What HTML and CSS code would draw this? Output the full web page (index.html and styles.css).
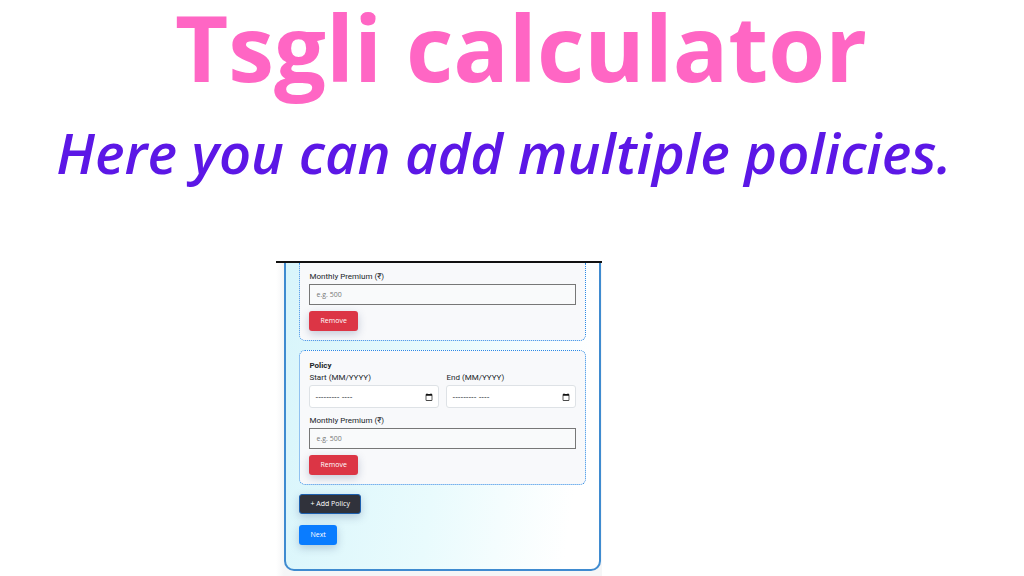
FILE: index.html
```html
<!DOCTYPE html>
<html lang="en">
<head>
    <meta charset="UTF-8">
    <meta name="viewport" content="width=device-width, initial-scale=1.0">
    <title>Tsgli calculator</title>
    <link rel="stylesheet" href="styles.css">
</head>
<body>
    <header class="intro">
        <h1 class="intro_title">Tsgli calculator</h1>
        <p class="intro_text">Here you can add multiple policies.</p>
    </header>
    <main class="preview">
        <form class="calc_form">
            <!-- first policy, scrolled down to its premium -->
            <div class="policy policy_cut">
                <label class="label" for="premium1">Monthly Premium (₹)</label>
                <input class="premium" id="premium1" type="text" placeholder="e.g. 500">
                <button class="btn btn_remove" type="button">Remove</button>
            </div>
            <div class="policy">
                <h2 class="policy_title">Policy</h2>
                <div class="dates">
                    <div class="date_item">
                        <label class="label" for="start2">Start (MM/YYYY)</label>
                        <div class="month">
                            <input class="month_input" id="start2" type="text" placeholder="--------- ----">
                            <button class="month_btn" type="button" aria-label="Pick start month">
                                <svg viewBox="0 0 24 24" width="8" height="8"><path fill="#111" d="M20 3h-1V1h-2v2H7V1H5v2H4c-1.100 0-2 .9-2 2v16c0 1.100.9 2 2 2h16c1.100 0 2-.9 2-2V5c0-1.100-.9-2-2-2zm0 18H4V8h16v13z"/></svg>
                            </button>
                        </div>
                    </div>
                    <div class="date_item">
                        <label class="label" for="end2">End (MM/YYYY)</label>
                        <div class="month">
                            <input class="month_input" id="end2" type="text" placeholder="--------- ----">
                            <button class="month_btn" type="button" aria-label="Pick end month">
                                <svg viewBox="0 0 24 24" width="8" height="8"><path fill="#111" d="M20 3h-1V1h-2v2H7V1H5v2H4c-1.100 0-2 .9-2 2v16c0 1.100.9 2 2 2h16c1.100 0 2-.9 2-2V5c0-1.100-.9-2-2-2zm0 18H4V8h16v13z"/></svg>
                            </button>
                        </div>
                    </div>
                </div>
                <label class="label" for="premium2">Monthly Premium (₹)</label>
                <input class="premium" id="premium2" type="text" placeholder="e.g. 500">
                <button class="btn btn_remove" type="button">Remove</button>
            </div>
            <button class="btn btn_add" type="button">+ Add Policy</button>
            <button class="btn btn_next" type="button">Next</button>
        </form>
    </main>
</body>
</html>
```

FILE: styles.css
```css
html,body{
    margin:0;
    padding:0;
    background:#fff;
}
body{
    font-family: Roboto, "Noto Sans", sans-serif;
    color:#212529;
}
.intro{
    font-family: "Open Sans", "Noto Sans", sans-serif;
    text-align:center;
    white-space:nowrap;
}
.intro_title{
    margin:0;
    padding-left:18px;
    font-size:92px;
    line-height:94px;
    font-weight:700;
    color:#ff66c4;
}
.intro_text{
    margin:0;
    padding:24px 16px 0 0;
    font-size:56px;
    line-height:68px;
    font-weight:600;
    font-style:italic;
    color:#5c17e6;
}
/* 
    form preview
*/
.preview{
    box-sizing:border-box;
    max-width:326px;
    margin:75px 0 0 27%;
    padding:0 1px 6px 8px;
    border-top:2px solid #111;
    background: linear-gradient(to right, #fff, #f5f6f7 8px);
}
.calc_form{
    display:flex;
    flex-direction:column;
    align-items:flex-start;
    padding:0 13px 24px;
    border:2px solid #3f8bd0;
    border-top:0;
    border-radius:0 0 10px 10px;
    background: linear-gradient(98deg, #d8f5fb, #e9fbfd 50%, #fff 90%);
}
.policy{
    box-sizing:border-box;
    display:flex;
    flex-direction:column;
    align-items:flex-start;
    width:100%;
    margin-bottom:9px;
    padding:9px;
    border:1px dotted #2b8ae6;
    border-radius:6px;
    background:#f8f9fb;
}
.policy_cut{
    padding-top:7px;
    border-top:0;
    border-radius:0 0 6px 6px;
}
.policy_title{
    margin:0;
    font-size:8px;
    line-height:11px;
    font-weight:700;
}
.label{
    font-size:8px;
    line-height:13px;
}
.dates{
    display:flex;
    gap:7px;
    width:100%;
    margin-bottom:6px;
}
.date_item{
    display:flex;
    flex:1;
    flex-direction:column;
    gap:1px;
    min-width:0;
}
.month{
    box-sizing:border-box;
    display:flex;
    align-items:center;
    height:23px;
    padding:0 5px;
    border:1px solid #dee2e6;
    border-radius:3px;
    background:#fff;
}
.month_input{
    flex:1;
    min-width:0;
    padding:0;
    border:0;
    background:none;
    font-family: "Liberation Sans", sans-serif;
    font-size:8px;
}
.month_input::placeholder{
    color:#212529;
}
.month_btn{
    display:flex;
    padding:0;
    border:0;
    background:none;
}
.premium{
    box-sizing:border-box;
    width:100%;
    height:21px;
    margin:1px 0 6px;
    padding:0 6px;
    border:1px solid #777;
    background:#f9fafb;
    font-family: "Open Sans", sans-serif;
    font-size:7px;
}
.premium::placeholder{
    color:#777;
}
.btn{
    box-sizing:border-box;
    height:20px;
    padding:0 11px;
    border:0;
    border-radius:3px;
    font-family: "Open Sans", sans-serif;
    font-size:7px;
    line-height:18px;
    font-weight:500;
    color:#fff;
    box-shadow:0 3px 8px rgba(40, 60, 110, .25);
}
.btn_remove{
    background:#dc3545;
}
.btn_add{
    margin-bottom:11px;
    padding:0 10px;
    border:1px solid #1c5fae;
    background:#30323b;
}
.btn_next{
    background:#0a7cff;
}
```
